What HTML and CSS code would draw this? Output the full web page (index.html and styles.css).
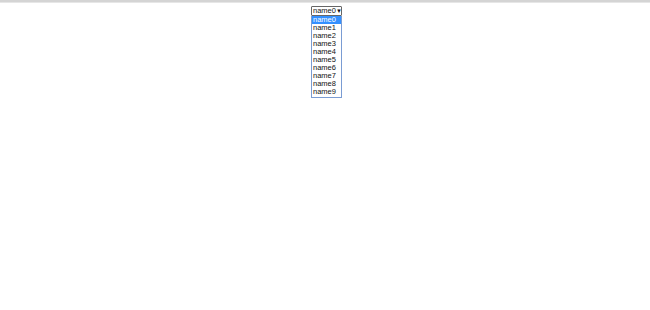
FILE: index.html
```html
<!DOCTYPE html>
<html>
<head>
<meta charset="utf-8">
<link rel="stylesheet" href="styles.css">
</head>
<body>
<div class="topbar"></div>
<div class="stage">
  <div class="combo">
    <div class="select"><span>name0</span><span class="arrow">▼</span></div>
    <ul class="list">
      <li class="sel">name0</li>
      <li>name1</li>
      <li>name2</li>
      <li>name3</li>
      <li>name4</li>
      <li>name5</li>
      <li>name6</li>
      <li>name7</li>
      <li>name8</li>
      <li>name9</li>
    </ul>
  </div>
</div>
</body>
</html>
```
FILE: styles.css
```css
html, body { margin: 0; padding: 0; background: #fff; }
body { font-family: "Liberation Sans", Arial, sans-serif; }
.topbar { height: 2px; background: #d4d4d4; border-bottom: 1px solid #e6e6e6; }
.stage { display: flex; justify-content: center; padding-top: 3px; padding-left: 3px; }
.combo { width: 31px; font-size: 7.5px; color: #111; }
.select {
  height: 8px; border: 1px solid #666; display: flex; align-items: center;
  justify-content: space-between; padding: 0 2px 0 1px; line-height: 8px; border-radius: 1px;
}
.arrow { font-size: 6px; }
.list {
  list-style: none; margin: 0; padding: 0 0 1px 0; border: 1px solid #7a9cd3; border-top: none;
}
.list li { height: 8px; line-height: 8px; padding-left: 1px; }
.list li.sel { background: #3390ff; color: #fff; }
```
